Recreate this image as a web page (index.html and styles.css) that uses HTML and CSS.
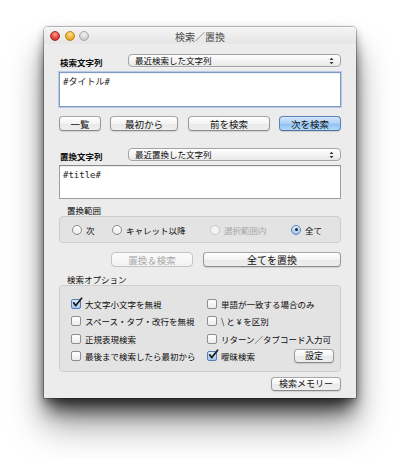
FILE: index.html
```html
<!DOCTYPE html>
<html lang="ja">
<head>
<meta charset="utf-8">
<title>検索／置換</title>
<link rel="stylesheet" href="styles.css">
</head>
<body>
<div class="stage">
  <div class="window">
    <div class="titlebar">
      <div class="lights">
        <span class="light red"></span>
        <span class="light yellow"></span>
        <span class="light gray"></span>
      </div>
      <div class="title">検索／置換</div>
      <div></div>
    </div>
    <div class="content">
      <div class="field-row">
        <span class="field-label">検索文字列</span>
        <div class="popup">
          <span>最近検索した文字列</span>
          <svg class="arrows" width="5" height="8" viewBox="0 0 5 8"><path d="M0.5 3 L2.5 0.8 L4.5 3 Z M0.5 5 L2.5 7.2 L4.5 5 Z" fill="#333"/></svg>
        </div>
      </div>
      <div class="textbox focused">#タイトル#</div>
      <div class="btn-row search-btns">
        <div class="btn b-list">一覧</div>
        <div class="btn b-first">最初から</div>
        <div class="btn b-prev">前を検索</div>
        <div class="btn default b-next">次を検索</div>
      </div>

      <div class="field-row second">
        <span class="field-label">置換文字列</span>
        <div class="popup">
          <span>最近置換した文字列</span>
          <svg class="arrows" width="5" height="8" viewBox="0 0 5 8"><path d="M0.5 3 L2.5 0.8 L4.5 3 Z M0.5 5 L2.5 7.2 L4.5 5 Z" fill="#333"/></svg>
        </div>
      </div>
      <div class="textbox replace">#title#</div>

      <div class="section-label">置換範囲</div>
      <div class="group radios">
        <label class="radio-item"><span class="radio"></span>次</label>
        <label class="radio-item"><span class="radio"></span>キャレット以降</label>
        <label class="radio-item disabled"><span class="radio"></span>選択範囲内</label>
        <label class="radio-item"><span class="radio on"></span>全て</label>
      </div>

      <div class="btn-row replace-btns">
        <div class="btn disabled b-repfind">置換＆検索</div>
        <div class="btn b-repall">全てを置換</div>
      </div>

      <div class="section-label opt">検索オプション</div>
      <div class="group options">
        <label class="check-item"><span class="check on"><svg width="12" height="12" viewBox="0 0 12 12"><path d="M2.6 5.8 L4.8 8.6 L10.6 1.2" fill="none" stroke="#1a1a1a" stroke-width="1.7" stroke-linecap="round" stroke-linejoin="round"/></svg></span>大文字小文字を無視</label>
        <label class="check-item"><span class="check"></span>単語が一致する場合のみ</label>
        <label class="check-item"><span class="check"></span>スペース・タブ・改行を無視</label>
        <label class="check-item"><span class="check"></span>\ と ¥ を区別</label>
        <label class="check-item"><span class="check"></span>正規表現検索</label>
        <label class="check-item"><span class="check"></span>リターン／タブコード入力可</label>
        <label class="check-item"><span class="check"></span>最後まで検索したら最初から</label>
        <div class="last-cell">
          <label class="check-item"><span class="check on"><svg width="12" height="12" viewBox="0 0 12 12"><path d="M2.6 5.8 L4.8 8.6 L10.6 1.2" fill="none" stroke="#1a1a1a" stroke-width="1.7" stroke-linecap="round" stroke-linejoin="round"/></svg></span>曖昧検索</label>
          <div class="btn b-settings">設定</div>
        </div>
      </div>

      <div class="btn-row memory-row">
        <div class="btn b-memory">検索メモリー</div>
      </div>
    </div>
  </div>
</div>
</body>
</html>
```

FILE: styles.css
```css
* { box-sizing: border-box; }

html, body {
  margin: 0;
  background: #ffffff;
}

body {
  font-family: "Noto Sans CJK JP", "Noto Sans", sans-serif;
  color: #0a0a0a;
  font-size: 8.5px;
}

.stage {
  padding: 27px 44px 60px;
}

.window {
  width: 312px;
  height: 371px;
  background: #ececec;
  border-radius: 4px 4px 1px 1px;
  display: flex;
  flex-direction: column;
  box-shadow:
    0 0 0 1px rgba(0, 0, 0, 0.25),
    0 4px 8px rgba(0, 0, 0, 0.35),
    0 16px 18px -4px rgba(0, 0, 0, 0.7),
    0 28px 36px rgba(0, 0, 0, 0.35);
}

.titlebar {
  height: 17px;
  flex: none;
  display: grid;
  grid-template-columns: 1fr auto 1fr;
  align-items: center;
  background: linear-gradient(#f3f3f3, #e6e6e6);
  border-radius: 4px 4px 0 0;
  border-top: 1px solid #fafafa;
}

.lights {
  display: flex;
  gap: 4.5px;
  padding-left: 6px;
  align-items: center;
}

.light {
  width: 10px;
  height: 10px;
  border-radius: 50%;
  display: block;
}

.light.red {
  background: radial-gradient(circle at 50% 30%, #ff9d92 0%, #e5453b 55%, #b8241c 100%);
  border: 0.5px solid #a52a22;
}

.light.yellow {
  background: radial-gradient(circle at 50% 30%, #ffe49a 0%, #f3b32d 55%, #c98a10 100%);
  border: 0.5px solid #b8861a;
}

.light.gray {
  background: radial-gradient(circle at 50% 30%, #f4f4f4 0%, #d4d4d4 60%, #b8b8b8 100%);
  border: 0.5px solid #a8a8a8;
}

.title {
  font-size: 10px;
  color: #4a4a4a;
  line-height: 12px;
  padding-top: 1px;
}

.content {
  flex: 1;
  display: flex;
  flex-direction: column;
  padding: 9px 15px 7px;
}

.field-row {
  height: 13px;
  display: grid;
  grid-template-columns: 69px 1fr;
  align-items: center;
}

.field-row.second {
  margin-top: 16px;
}

.field-label {
  font-weight: bold;
  padding-left: 1px;
  padding-top: 3px;
  line-height: 12px;
}

.popup {
  height: 13px;
  border: 1px solid #a3a3a3;
  border-radius: 4px;
  background: linear-gradient(#ffffff, #f2f2f2 60%, #e8e8e8);
  display: flex;
  align-items: center;
  justify-content: space-between;
  padding: 0 6px 0 6px;
  line-height: 11px;
  box-shadow: 0 0.5px 0 rgba(255,255,255,0.8);
}

.arrows {
  display: block;
}

.textbox {
  margin-top: 6px;
  height: 35px;
  background: #fff;
  border: 1px solid #9d9d9d;
  border-top-color: #8a8a8a;
  padding: 3px 3px 0;
  font-family: "DejaVu Sans Mono", "Noto Sans CJK JP", monospace;
  font-size: 9px;
  line-height: 12px;
  color: #222;
  box-shadow: inset 0 1px 1px rgba(0,0,0,0.08);
}

.textbox.focused {
  border-color: #7e9cc7;
  box-shadow: 0 0 0 1px rgba(140, 175, 225, 0.55), inset 0 1px 1px rgba(0,0,0,0.06);
}

.textbox.replace {
  margin-top: 5px;
  height: 34px;
}

.btn-row {
  display: flex;
  height: 15px;
}

.search-btns {
  margin-top: 9px;
}

.btn {
  height: 15px;
  border: 1px solid #999;
  border-top-color: #a8a8a8;
  border-bottom-color: #8a8a8a;
  border-radius: 4px;
  background: linear-gradient(#ffffff, #f4f4f4 50%, #e9e9e9 51%, #efefef);
  display: flex;
  align-items: center;
  justify-content: center;
  font-size: 9.5px;
  line-height: 12px;
  color: #111;
  box-shadow: 0 0.5px 1px rgba(0,0,0,0.12);
}

.btn.default {
  background: linear-gradient(#d6e9fb, #a9cff5 50%, #8cbef1 51%, #b4dbfa);
  border-color: #5d82b8;
  border-bottom-color: #4a6fa5;
}

.btn.disabled {
  color: #a9a9a9;
  border-color: #c4c4c4;
  background: linear-gradient(#fbfbfb, #f2f2f2);
  box-shadow: none;
}

.b-list { width: 42px; }
.b-first { width: 68px; margin-left: 9px; }
.b-prev { width: 82px; margin-left: 10px; }
.b-next { width: 62px; margin-left: 9px; }

.section-label {
  margin-top: 5px;
  height: 12px;
  line-height: 12px;
  padding-left: 8px;
  font-size: 8.5px;
}

.section-label.opt {
  margin-top: 6px;
}

.group {
  background: #e3e3e3;
  border: 1px solid #cdcdcd;
  border-radius: 4px;
}

.radios {
  height: 27px;
  display: grid;
  grid-template-columns: 40px 98px 81px auto;
  align-items: center;
  padding-left: 12px;
}

.radio-item {
  display: flex;
  align-items: center;
  gap: 4px;
  line-height: 12px;
}

.radio-item.disabled {
  color: #a6a6a6;
}

.radio {
  width: 10px;
  height: 10px;
  border-radius: 50%;
  border: 1px solid #8c8c8c;
  background: linear-gradient(#ffffff, #ececec);
  display: flex;
  align-items: center;
  justify-content: center;
  flex: none;
}

.radio-item.disabled .radio {
  border-color: #c9c9c9;
  background: #f3f3f3;
}

.radio.on {
  border-color: #5a7db2;
  background: linear-gradient(#dcecfc, #9fc7f1);
}

.radio.on::after {
  content: "";
  width: 3px;
  height: 3px;
  border-radius: 50%;
  background: #1b2a40;
}

.replace-btns {
  margin-top: 9px;
  justify-content: flex-end;
}

.b-repfind { width: 82px; }
.b-repall { width: 138px; margin-left: 10px; font-size: 10px; }

.options {
  height: 87px;
  display: grid;
  grid-template-columns: 136px 1fr;
  grid-auto-rows: 17.5px;
  padding: 9px 6px 7px 11px;
  align-items: center;
}

.check-item {
  display: flex;
  align-items: center;
  gap: 4px;
  line-height: 12px;
  white-space: nowrap;
}

.check {
  width: 10px;
  height: 10px;
  border: 1px solid #8e8e8e;
  border-radius: 2px;
  background: linear-gradient(#ffffff, #ececec);
  flex: none;
  position: relative;
}

.check.on {
  border-color: #5a7db2;
  background: linear-gradient(#dcecfc, #9fc7f1);
}

.check svg {
  position: absolute;
  left: -1px;
  top: -3px;
}

.last-cell {
  display: flex;
  align-items: center;
  justify-content: space-between;
}

.b-settings {
  width: 40px;
  height: 14px;
  font-size: 9px;
  margin-top: -1px;
}

.memory-row {
  margin-top: 5px;
  height: 14px;
  justify-content: flex-end;
}

.b-memory {
  width: 70px;
  height: 14px;
  font-size: 9px;
}
```
